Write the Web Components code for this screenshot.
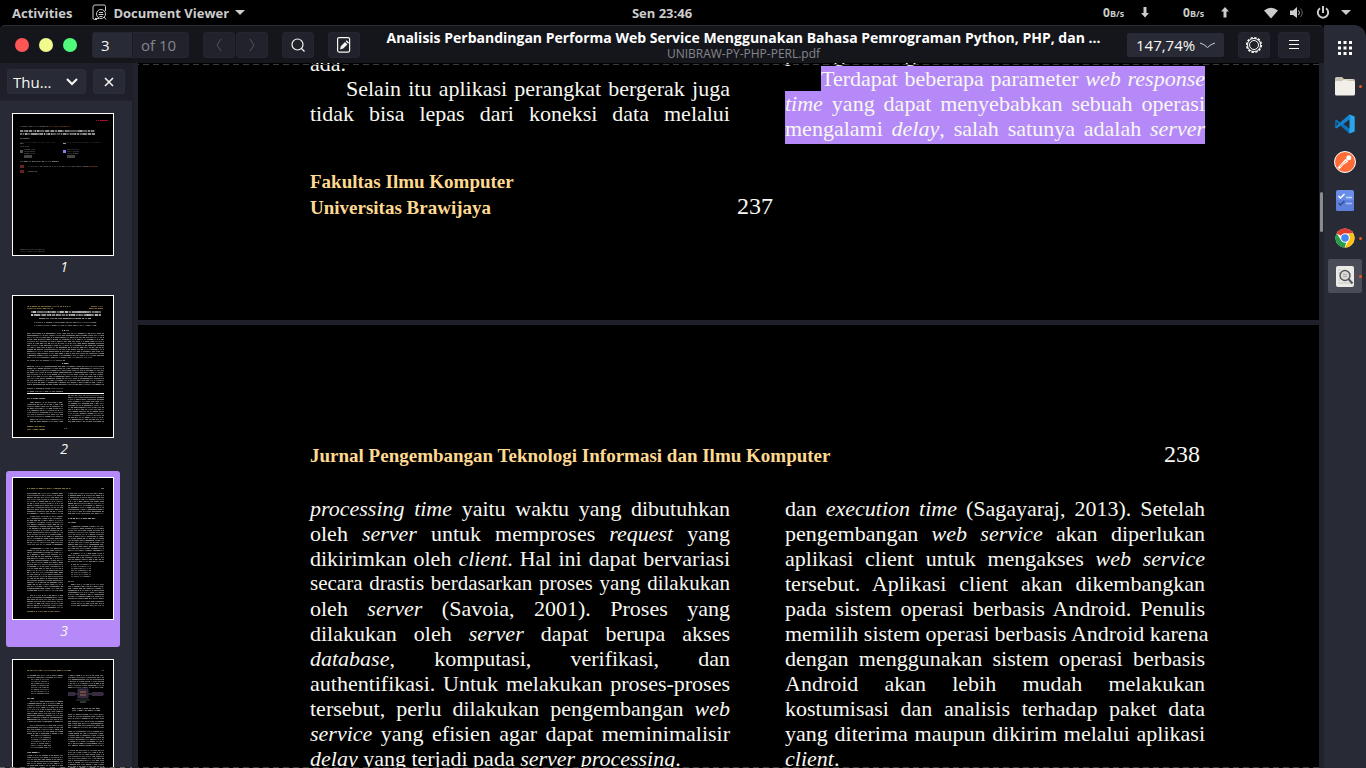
<!DOCTYPE html>
<html lang="id">
<head>
<meta charset="utf-8">
<title>Document Viewer</title>
<style>
html,body{height:100%;margin:0}
body{background:#000;overflow:hidden;font-family:"Open Sans","Noto Sans",sans-serif;font-size:14px;color:#f8f8f2}
</style>
</head>
<body>
<viewer-desktop></viewer-desktop>
<script>
const define = (name, css, html, setup) => {
  const t = document.createElement('template');
  t.innerHTML = `<style>*{box-sizing:border-box}svg{display:block}${css}</style>${html}`;
  customElements.define(name, class extends HTMLElement {
    connectedCallback() {
      if (this.shadowRoot) return;
      this.attachShadow({mode: 'open'}).append(t.content.cloneNode(true));
      if (setup) setup(this, this.shadowRoot);
    }
  });
};

/* System bar */
define('system-bar', `
:host{display:grid;grid-template-columns:1fr auto 1fr 42px;align-items:center;height:25px;background:#000;color:#ccc;font-weight:700;font-size:13px}
.left{display:flex;align-items:center;padding-left:12px}
button{all:unset;display:flex;align-items:center}
.app{margin-left:20px;gap:6px}
.right{grid-column:3/5;display:flex;align-items:center;justify-content:flex-end;padding-right:15px}
.rate{font-size:12px;width:22px;white-space:nowrap}
small{font-size:9px}
.arr{margin:0 34px 0 16px}
.last{margin-right:34px}
.icons{gap:10px}
`, `
<div class="left"><button>Activities</button>
<button class="app"><svg width="15" height="17" viewBox="0 0 15 17" fill="none" stroke="#ccc"><path d="M5 15.500H2.500Q1 15.500 1 14V3Q1 1 3 1h9q1.500 0 1.500 1.500V7"/><circle cx="9" cy="10" r="4.500"/><path d="M7 8.500h4M6.500 10.500h5M7.500 12.500h3M12 13l2 2.500M3 14.500h4"/></svg><span>Document Viewer</span><svg width="10" height="6"><path d="M0 0h10L5 5z" fill="#ccc"/></svg></button></div>
<span>Sen 23:46</span>
<div class="right"><span class="rate">0<small>B/s</small></span><svg class="arr" width="8" height="11"><path d="M2.500 0h3v6H8L4 10.500 0 6h2.500z" fill="#ccc"/></svg>
<span class="rate">0<small>B/s</small></span><svg class="arr last" width="8" height="11"><path d="M2.500 10.500h3v-6H8L4 0 0 4.500h2.500z" fill="#ccc"/></svg>
<button class="icons"><svg width="16" height="14"><path d="M1 4.500Q8-1 15 4.500L8 12.500z" fill="#ccc"/></svg><svg width="16" height="14" fill="none" stroke="#ccc"><path d="M1 4.500h3L8 1v11L4 9H1z" fill="#ccc" stroke="none"/><path d="M9.500 4.500q2 2.300 0 4.500"/><path d="M11.500 2.500q3.500 4.300 0 8.500" stroke="#666"/></svg><svg width="16" height="14" viewBox="0 0 16 14" fill="none" stroke="#ccc" stroke-width="2"><path d="M5 2.200a5.200 5.200 0 1 0 6 0M8 0v7"/></svg><svg width="10" height="6"><path d="M0 0h10L5 5z" fill="#ccc"/></svg></button></div>`);

/* Header bar */
define('header-bar', `
:host{display:flex;align-items:center;height:38px;background:#15161c;border-top:1px solid #2b2c33;border-radius:5px 5px 0 0;padding:0 14px 0 15px}
button,input,select{font:inherit;color:inherit;margin:0;border:0;outline:0}
.dots{display:flex;gap:10px;margin-right:15px}
.dots button{width:14px;height:14px;border-radius:50%;padding:0}
.pages{display:flex;height:26px;border:1px solid #24252f;border-radius:3px;background:#21222c;font-size:15px;line-height:24px}
.pages input{width:40px;padding:0 8px;background:#282a36;border-right:1px solid #191a21}
.pages label{width:55px;padding-left:8px;color:#85868b}
.btn{width:32px;height:26px;border-radius:3px;background:#21222c;border:1px solid #24252f;display:grid;place-items:center;padding:0}
.nav{display:flex;gap:1px;margin:0 14px}
.title{flex:1;min-width:0;text-align:center;padding:0 18px}
.title b,.title span{display:block;white-space:nowrap}
.title b{font-size:14px;line-height:17px;color:#fff}
.title span{font-size:12px;line-height:15px;color:#85868b}
.zoom{position:relative;width:97px;height:24px;margin-right:14px}
.zoom select{appearance:none;width:100%;height:24px;padding:0 0 0 9px;background:#282a36;border-radius:2px;font-size:15px}
.zoom svg{position:absolute;right:8px;top:9px;pointer-events:none}
`, `
<div class="dots"><button aria-label="Close" style="background:#ff5555"></button><button aria-label="Minimize" style="background:#f1fa8c"></button><button aria-label="Maximize" style="background:#50fa7b"></button></div>
<div class="pages"><input id="p" value="3"><label for="p">of 10</label></div>
<div class="nav"><button class="btn" aria-label="Previous"><svg width="8" height="14" fill="none" stroke="#53545c"><path d="M6 1L2 7l4 6"/></svg></button><button class="btn" aria-label="Next"><svg width="8" height="14" fill="none" stroke="#53545c"><path d="M2 1l4 6-4 6"/></svg></button></div>
<button class="btn" style="margin-right:14px" aria-label="Find"><svg width="16" height="16" fill="none" stroke="#f8f8f2" stroke-width="1.200"><circle cx="7.500" cy="7.500" r="5.500"/><path d="M11.500 11.500l3 3"/></svg></button>
<button class="btn" aria-label="Annotate"><svg width="14" height="16" viewBox="0 0 14 16"><rect x=".6" y=".6" width="12" height="14.500" rx="1.500" fill="none" stroke="#f8f8f2" stroke-width="1.200"/><path d="M3 12.500l.8-3.300L8 5l2.400 2.400-4.200 4.200zM8.700 4.300l1-1 2.400 2.400-1 1z" fill="#f8f8f2"/></svg></button>
<div class="title"><b>Analisis Perbandingan Performa Web Service Menggunakan Bahasa Pemrograman Python, PHP, dan …</b><span>UNIBRAW-PY-PHP-PERL.pdf</span></div>
<div class="zoom"><select aria-label="Zoom"><option>147,74%</option></select><svg width="17" height="7" fill="none" stroke="#d0d0d0"><path d="M1 1q4 1 7.500 4.500Q12 2 16 1"/></svg></div>
<button class="btn" style="margin-right:8px" aria-label="Settings"><svg width="18" height="18" viewBox="0 0 18 18" fill="none" stroke="#f8f8f2"><circle cx="9" cy="9" r="7.300" stroke-width="1.600" stroke-dasharray="2.400 1.420"/><circle cx="9" cy="9" r="6.500"/><circle cx="9" cy="9" r="4.500"/></svg></button>
<button class="btn" aria-label="Menu"><svg width="12" height="12" stroke="#f8f8f2"><path d="M1 1.500h10M1 5.500h10M1 9.500h10"/></svg></button>`);

/* Miniature page: bands of tiny text described as "x,width,y,lines,step,colour,height" */
const MINI = {
  1: ['83,12,6,1,2,#c01830,1', '7,27,12,1,2,#555,1', '34,23,12,1,2,#70401c,1', '7,75,17,2,3,#bbb,2', '7,10,24,1,2,#777,1', '7,35,28,1,2,#222,1', '50,38,28,1,2,#222,1', '7,4,29,1,2,#555,1', '50,3,29,1,2,#aaa,1', '7,9,32,1,2,#555,1', '11,11,35,3,2,#444,1', '54,12,35,3,2,#444,1', '7,39,47,1,2,#777,1', '15,62,52,1,2,#555,1', '72,13,52,1,2,#70401c,1', '15,10,57,1,2,#555,1', '7,25,135,2,2,#444,1'],
  2: ['14,44,10,1,2,#98834f,1', '78,12,10,1,2,#98834f,1', '14,26,12,1,2,#98834f,1', '76,14,12,1,2,#98834f,1', '18,70,16,2,3,#ddd,2', '26,52,22,1,2,#bbb,1', '21,63,26,2,3,#777,1', '49,7,34,1,2,#bbb,1', '14,77,37,12,2,#888,1', '14,65,61,1,2,#777,1', '14,38,64,1,2,#777,1', '49,7,67,1,2,#bbb,1', '14,77,70,10,2,#888,1', '14,36,92,2,3,#777,1', '14,18,102,1,2,#bbb,1', '17,33,106,1,2,#888,1', '14,36,108,7,2,#888,1', '17,33,123,2,2,#888,1', '55,36,99,14,2,#888,1', '14,18,130,2,3,#98834f,1', '51,3,132,1,2,#777,1'],
  3: ['14,44,10,1,2,#98834f,1', '88,3,10,1,2,#777,1', '14,36,15,11,2,#888,1', '17,33,38,1,2,#888,1', '14,36,40,14,2,#888,1', '17,33,70,1,2,#888,1', '14,36,72,21,2,#888,1', '17,33,117,1,2,#888,1', '14,36,119,6,2,#888,1', '14,33,133,1,2,#98834f,1', '55,36,15,11,2,#888,1', '55,28,40,1,2,#bbb,1', '55,8,44,1,2,#bbb,1', '58,33,48,1,2,#888,1', '55,36,50,12,2,#888,1', '58,33,75,1,2,#888,1', '55,36,77,4,2,#888,1', '58,20,86,7,2,#777,1', '55,6,103,1,2,#bbb,1', '58,33,106,1,2,#888,1', '55,36,108,7,2,#888,1', '58,33,123,3,2,#888,1'],
  4: ['14,44,10,1,2,#98834f,1', '88,3,10,1,2,#777,1', '14,36,15,2,2,#888,1', '18,18,19,8,2,#777,1', '14,7,38,1,2,#bbb,1', '17,33,41,1,2,#888,1', '14,36,43,10,2,#888,1', '17,33,65,1,2,#888,1', '14,36,67,4,2,#888,1', '18,20,75,7,2,#777,1', '14,13,92,1,2,#bbb,1', '14,36,95,20,2,#888,1', '55,36,15,7,2,#888,1', '59,28,48,2,2,#999,1', '55,36,54,3,2,#888,1', '55,36,61,4,2,#888,1', '55,36,71,8,2,#888,1', '55,36,90,14,2,#888,1']
};
define('page-thumb', `
:host{display:block;border-radius:3px;padding:6px;height:176px;flex:none}
:host([current]){background:#b58af8}
.page{border:1px solid #fff;background:#000;height:143px;overflow:hidden}
.label{text-align:center;font-style:italic;font-size:14px;line-height:22px;padding-left:2px}
`, `<div class="page"></div><div class="label"><slot></slot></div>`, (el, root) => {
  const n = el.getAttribute('page');
  let seed = 7919 * n, out = '';
  const rnd = () => (seed = (seed * 16807) % 2147483647) / 2147483647;
  for (const band of MINI[n]) {
    const [x, w, y, count, step, color, h] = band.split(',');
    for (let i = 0; i < +count; i++) {
      const ly = +y + i * step + (h > 1 ? 0 : 0.5), end = +x + +w;
      for (let cx = +x; cx < end;) {
        const len = Math.min(1 + Math.floor(rnd() * 3), end - cx);
        out += `<path d="M${cx} ${ly}h${len}" stroke="${color}" stroke-width="${h}" opacity="${(0.4 + rnd() * 0.5).toFixed(2)}"/>`;
        cx += len;
        if (rnd() > 0.6 && cx < end) {
          out += `<path d="M${cx} ${ly}h1" stroke="${color}" stroke-width="${h}" opacity=".2"/>`;
          cx += 1;
        }
      }
    }
  }
  if (n === '1') out += '<path d="M7 36h3v3H7z" fill="#555"/><path d="M50 36h3v3h-3z" fill="#8d7bf0"/><path d="M11 41h8v3h-8zM54 41h8v3h-8z" fill="#444"/><path d="M7 51h4v3H7zM7 56h4v3H7z" fill="#6b2027"/>';
  if (n === '2') out += '<path d="M14 97.500h77" stroke="#fff"/>';
  if (n === '4') out += '<path d="M55 34h36" stroke="#555"/><path d="M55 32h7v4h-7zM79 32h11v4H79z" fill="#372a41"/><path d="M65 29h10v9H65z" fill="#402434" stroke="#28304f"/><path d="M67 32h6M67 35h6" stroke="#8a745e"/><path d="M63 40h14" stroke="#2f4634"/><path d="M67 42h6" stroke="#666"/>';
  root.querySelector('.page').innerHTML = `<svg width="100" height="141">${out}</svg>`;
});

/* Side pane */
define('side-pane', `
:host{display:flex;flex-direction:column;width:133px;flex:none;background:#282a36;border-right:1px solid #1c1d25;position:relative;min-height:0}
.head{display:flex;align-items:center;gap:7px;height:38px;flex:none;padding:0 7px;background:#1e1f28;border-bottom:1px solid #22232d}
.pick{position:relative}
select,button{font:inherit;color:inherit;margin:0;height:25px;background:#282a36;border:1px solid #2b2d39;border-radius:3px}
select{appearance:none;width:79px;padding:0 0 0 5px;font-size:15px}
.pick svg{position:absolute;right:8px;top:9px;pointer-events:none}
button{width:33px;display:grid;place-items:center;padding:0}
.list{flex:1;min-height:0;overflow:hidden;display:flex;flex-direction:column;gap:6px;padding:6px 12px 0 6px}
.more{position:absolute;left:0;right:0;bottom:0;height:1px;background:repeating-linear-gradient(90deg,#666 0 5px,#222 5px 10px)}
`, `<div class="head"><div class="pick"><select aria-label="Side pane"><option>Thu…</option></select><svg width="12" height="8" fill="none" stroke="#f8f8f2" stroke-width="2"><path d="M1 1l5 5 5-5"/></svg></div><button aria-label="Close pane"><svg width="10" height="10" stroke="#f8f8f2" stroke-width="1.500"><path d="M1 1l8 8M9 1L1 9"/></svg></button></div>
<div class="list"><page-thumb page="1">1</page-thumb><page-thumb page="2">2</page-thumb><page-thumb page="3" current>3</page-thumb><page-thumb page="4"></page-thumb></div><div class="more"></div>`);

/* A column of justified text: every child of the slot is one set line */
define('text-column', `
:host{display:block;font:22px/25px "Liberation Serif",serif;color:#f8f8f2;min-width:0}
::slotted(p){margin:0;white-space:nowrap;text-align:justify;text-align-last:justify}
::slotted(p.end){text-align-last:left}
::slotted(p.in){padding-left:36px}
::slotted(p.tight){font-size:21px}
`, `<slot></slot>`);

/* One sheet of the document */
define('doc-sheet', `
:host{display:flex;flex-direction:column;background:#000;padding:0 114px 0 172px;overflow:hidden}
:host([tail]){justify-content:flex-end;height:257px;padding-bottom:99px;flex:none}
:host([start]){flex:1;min-height:0;padding-top:114px}
.cols{display:grid;grid-template-columns:minmax(0,1fr) minmax(0,1fr);gap:55px;flex:none}
`, `<slot name="head"></slot><div class="cols"><slot></slot></div><slot name="foot"></slot>`);

define('running-line', `
:host{display:grid;grid-template-columns:1fr auto;align-items:end;font:bold 19px/26px "Liberation Serif",serif;color:#ffd992;flex:none}
:host([slot=foot]){grid-template-columns:1fr auto 1fr;margin-top:28px;padding-right:5px}
:host([slot=head]){margin-bottom:27px;padding-right:5px}
.num{font-weight:400;font-size:24px;line-height:30px;color:#f8f8f2}
`, `<div><slot></slot></div><div class="num"><slot name="num"></slot></div>`);

define('doc-view', `
:host{display:flex;flex-direction:column;gap:5px;flex:1;min-width:0;min-height:0;background:#1e1f28;border:solid #21222c;border-width:0 5px;position:relative;overflow:hidden}
mark{background:#b58af8;color:inherit;padding-bottom:3px}
.edge{position:absolute;left:-5px;right:-5px;top:1px;height:1px;background:repeating-linear-gradient(90deg,#3b3b3b 0 6px,#000 6px 10px)}
.edge.low{top:auto;bottom:0}
`, `
<doc-sheet tail>
<text-column style="padding-top:10px"><p class="end">ada.</p><p class="in">Selain itu aplikasi perangkat bergerak juga</p><p>tidak bisa lepas dari koneksi data melalui</p></text-column>
<text-column><p class="end">perangkat bergerak.</p><p class="in"><mark>Terdapat beberapa parameter <i>web response</i></mark></p><p><mark><i>time</i> yang dapat menyebabkan sebuah operasi</mark></p><p><mark>mengalami <i>delay</i>, salah satunya adalah <i>server</i></mark></p></text-column>
<running-line slot="foot">Fakultas Ilmu Komputer<br>Universitas Brawijaya<span slot="num">237</span></running-line>
</doc-sheet>
<doc-sheet start>
<running-line slot="head">Jurnal Pengembangan Teknologi Informasi dan Ilmu Komputer<span slot="num">238</span></running-line>
<text-column><p><i>processing time</i> yaitu waktu yang dibutuhkan</p><p>oleh <i>server</i> untuk memproses <i>request</i> yang</p><p>dikirimkan oleh <i>client</i>. Hal ini dapat bervariasi</p><p class="tight">secara drastis berdasarkan proses yang dilakukan</p><p>oleh <i>server</i> (Savoia, 2001). Proses yang</p><p>dilakukan oleh <i>server</i> dapat berupa akses</p><p><i>database</i>, komputasi, verifikasi, dan</p><p>authentifikasi. Untuk melakukan proses-proses</p><p>tersebut, perlu dilakukan pengembangan <i>web</i></p><p><i>service</i> yang efisien agar dapat meminimalisir</p><p class="end"><i>delay</i> yang terjadi pada <i>server processing</i>.</p></text-column>
<text-column><p>dan <i>execution time</i> (Sagayaraj, 2013). Setelah</p><p>pengembangan <i>web service</i> akan diperlukan</p><p>aplikasi client untuk mengakses <i>web service</i></p><p>tersebut. Aplikasi client akan dikembangkan</p><p>pada sistem operasi berbasis Android. Penulis</p><p>memilih sistem operasi berbasis Android karena</p><p>dengan menggunakan sistem operasi berbasis</p><p>Android akan lebih mudah melakukan</p><p>kostumisasi dan analisis terhadap paket data</p><p>yang diterima maupun dikirim melalui aplikasi</p><p class="end"><i>client</i>.</p></text-column>
</doc-sheet>
<div class="edge"></div><div class="edge low"></div>`);

define('scroll-thumb', `:host{position:absolute;right:1px;top:129px;width:3px;height:40px;border-radius:2px;background:#8a8b8f;z-index:1}`, ``);

/* Dock */
define('dock-item', `
:host{display:block;position:relative;width:34px;height:34px}
:host([active]){background:#4a4c57;border-radius:2px}
button{all:unset;display:grid;place-items:center;width:34px;height:34px}
:host([running])::after{content:"";position:absolute;right:0;top:16px;width:3px;height:3px;border-radius:50%;background:#e95420}
`, `<button><slot></slot></button>`);
define('app-dock', `
:host{display:flex;flex-direction:column;align-items:center;gap:4px;width:42px;flex:none;padding-top:6px;background:#282a36;border-radius:0 12px 0 0}
`, `
<dock-item><svg width="14" height="14" fill="#fff"><path d="M0 0h3v3H0zM5.500 0h3v3h-3zM11 0h3v3h-3zM0 5.500h3v3H0zM5.500 5.500h3v3h-3zM11 5.500h3v3h-3zM0 11h3v3H0zM5.500 11h3v3h-3zM11 11h3v3h-3z"/></svg></dock-item>
<dock-item running><svg width="22" height="20"><path d="M1 4V2.500Q1 1 2.500 1H8l2 2h9.500Q21 3 21 5v5H1z" fill="#c9c2b0"/><rect x="1" y="5" width="20" height="14.500" rx="1.500" fill="#f2efe8"/><path d="M1 6.500Q1 5 2.500 5H8l2-1.500h9.500" fill="#f2efe8"/></svg></dock-item>
<dock-item><svg width="20" height="20" viewBox="0 0 100 100"><path d="M72 2L98 13V87L72 98 26 57 8 71 1 67V33L8 29 26 43z" fill="#0a73ba"/><path d="M72 2l26 11v74L72 98z" fill="#2ca4ec"/><path d="M72 28v44L42 50zM8 40v20l9-10z" fill="#282a36"/><path d="M1 67L72 2l3 23L8 71z" fill="#1684cf"/></svg></dock-item>
<dock-item><svg width="22" height="22"><circle cx="11" cy="11" r="10.500" fill="#ff6c37" stroke="#fff"/><path d="M4.500 17.500l8-9" stroke="#fff" stroke-width="2.500"/><path d="M6 15.500L13 9" stroke="#ff6c37" stroke-width=".8"/><circle cx="14.800" cy="6.800" r="2.500" fill="#fff"/><path d="M12 9l1.500 1.500-4 2.500" fill="none" stroke="#fff" stroke-width="1.200"/></svg></dock-item>
<dock-item><svg width="18" height="21"><rect width="18" height="21" rx="2" fill="#6a8de8"/><path d="M0 10h18v9q0 2-2 2H2q-2 0-2-2z" fill="#5c80dc"/><g fill="none"><path d="M2.500 6l2 2 4-4" stroke="#fff" stroke-width="1.400"/><path d="M10 7.500h6" stroke="#c6d4fa" stroke-width="1.500"/><path d="M2.500 13l2 2 4-4" stroke="#344b91" stroke-width="1.400"/><path d="M10 13.500h6" stroke="#a9bdf5" stroke-width="1.500"/></g></svg></dock-item>
<dock-item running><svg width="20" height="20" viewBox="0 0 48 48"><circle cx="24" cy="24" r="23" fill="#fff"/><path d="M24 1a23 23 0 0 1 20 12H24A11 11 0 0 0 14.500 18.500L4 13A23 23 0 0 1 24 1z" fill="#e33b2e"/><path d="M44 13A23 23 0 0 1 23.500 47L33.500 29.500A11 11 0 0 0 33 17V13z" fill="#fbc116"/><path d="M4 12.500L14.500 29.500A11 11 0 0 0 27 34.500L23 47A23 23 0 0 1 4 12.500z" fill="#269b48"/><circle cx="24" cy="24" r="11" fill="#fff"/><circle cx="24" cy="24" r="9" fill="#4285f4"/></svg></dock-item>
<dock-item running active><svg width="18" height="21"><rect width="18" height="21" rx="2" fill="#eceae6"/><path d="M2 4h3M2 7h2M2 14h2M2 17h14" stroke="#c9c7c2"/><circle cx="9" cy="9.500" r="5" fill="#dcdad6" stroke="#55565a" stroke-width="1.400"/><path d="M12.500 13l4 4.500" stroke="#55565a" stroke-width="2"/><path d="M7 8.500h4M7 10.500h4" stroke="#aaa"/></svg></dock-item>`);

define('viewer-window', `
:host{display:flex;flex-direction:column;flex:1;min-width:0;min-height:0}
.body{display:flex;flex:1;min-height:0;position:relative}
`, `<header-bar></header-bar><div class="body"><side-pane></side-pane><doc-view></doc-view><scroll-thumb></scroll-thumb></div>`);

define('viewer-desktop', `
:host{display:flex;flex-direction:column;height:100vh}
.work{display:flex;flex:1;min-height:0}
`, `<system-bar></system-bar><div class="work"><viewer-window></viewer-window><app-dock></app-dock></div>`);
</script>
</body>
</html>
